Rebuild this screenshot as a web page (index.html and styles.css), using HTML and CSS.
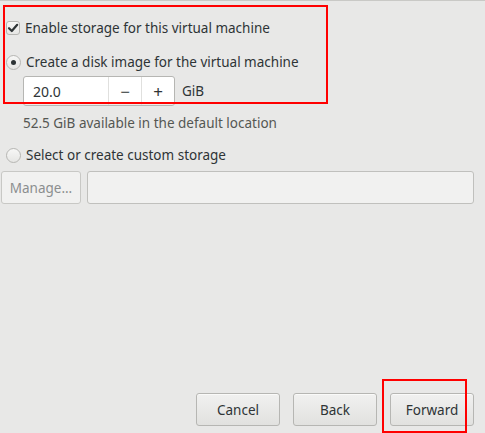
FILE: index.html
```html
<!DOCTYPE html>
<html>
<head>
<meta charset="utf-8">
<link rel="stylesheet" href="styles.css">
</head>
<body>
<div class="page">
  <div class="form">
    <div class="row opt opt-first">
      <span class="check"><svg width="12" height="12" viewBox="0 0 12 12"><path d="M2 6.2 L4.8 9 L10.2 2.8" fill="none" stroke="#2e3436" stroke-width="2.2" stroke-linecap="round" stroke-linejoin="round"/></svg></span>
      <span class="label">Enable storage for this virtual machine</span>
    </div>
    <div class="row opt">
      <span class="radio on"></span>
      <span class="label">Create a disk image for the virtual machine</span>
    </div>
    <div class="row size">
      <div class="spin">
        <span class="spin-entry">20.0</span>
        <span class="spin-btn">&#8722;</span>
        <span class="spin-btn">+</span>
      </div>
      <span class="unit">GiB</span>
    </div>
    <div class="hint">52.5 GiB available in the default location</div>
    <div class="row opt opt2">
      <span class="radio"></span>
      <span class="label">Select or create custom storage</span>
    </div>
    <div class="row manage">
      <span class="btn disabled">Manage...</span>
      <span class="path-entry"></span>
    </div>
  </div>
  <div class="footer">
    <span class="btn">Cancel</span>
    <span class="btn">Back</span>
    <span class="btn">Forward</span>
  </div>
</div>
<div class="mark mark1"></div>
<div class="mark mark2"></div>
</body>
</html>
```
FILE: styles.css
```css
html, body {
  margin: 0;
  padding: 0;
}
body {
  background: #e8e8e7;
  font-family: "Noto Sans", "DejaVu Sans", sans-serif;
  font-size: 13.5px;
  color: #2e3436;
  width: 485px;
  height: 433px;
  overflow: hidden;
  position: relative;
}
.page {
  box-sizing: border-box;
  height: 433px;
  border-top: 1px solid #c9c9c6;
  display: flex;
  flex-direction: column;
  padding: 13px 11px 7px 1px;
}
.form {
  display: flex;
  flex-direction: column;
}
.row {
  display: flex;
  align-items: center;
}
.opt {
  height: 28px;
  padding-left: 5px;
  gap: 5px;
}
.opt-first { margin-bottom: 6px; }
.opt2 { height: 30px; }
.check {
  box-sizing: border-box;
  width: 14px;
  height: 14px;
  border: 1px solid #b6b6b3;
  border-radius: 3px;
  background: linear-gradient(#f7f7f6, #e6e6e4);
  display: flex;
  align-items: center;
  justify-content: center;
}
.radio {
  box-sizing: border-box;
  width: 15px;
  height: 15px;
  border: 1px solid #b6b6b3;
  border-radius: 50%;
  background: linear-gradient(#f7f7f6, #e6e6e4);
  display: flex;
  align-items: center;
  justify-content: center;
}
.radio.on::after {
  content: "";
  width: 5px;
  height: 5px;
  border-radius: 50%;
  background: #2e3436;
}
.label { white-space: nowrap; }
.size {
  padding-left: 22px;
  height: 30px;
  gap: 7px;
}
.spin {
  box-sizing: border-box;
  display: flex;
  height: 30px;
  width: 152px;
  border: 1px solid #b6b6b3;
  border-radius: 3px;
  background: #fff;
  box-shadow: inset 0 -1px 0 #ededec;
}
.spin-entry {
  width: 84px;
  padding-left: 9px;
  box-sizing: border-box;
  display: flex;
  align-items: center;
  font-size: 14px;
}
.spin-btn {
  flex: 1;
  display: flex;
  align-items: center;
  justify-content: center;
  border-left: 1px solid #e0e0de;
  font-size: 17px;
  color: #2e3436;
}
.hint {
  height: 34px;
  line-height: 34px;
  padding-left: 22px;
  color: #555753;
}
.manage {
  margin-top: 1px;
  gap: 6px;
}
.btn {
  box-sizing: border-box;
  height: 33px;
  width: 84px;
  display: flex;
  align-items: center;
  justify-content: center;
  border: 1px solid #b6b6b3;
  border-radius: 3px;
  background: linear-gradient(#f1f1f0, #e1e1df);
  box-shadow: inset 0 1px 0 #fafaf9;
}
.btn.disabled {
  width: 80px;
  background: #f1f1f0;
  border-color: #c8c8c5;
  color: #8b8e8f;
  box-shadow: none;
}
.path-entry {
  box-sizing: border-box;
  height: 33px;
  flex: 1;
  border: 1px solid #c0c0bd;
  border-radius: 3px;
  background: #f1f1f0;
}
.footer {
  margin-top: auto;
  display: flex;
  justify-content: flex-end;
  gap: 13px;
}
.mark {
  position: absolute;
  box-sizing: border-box;
  border: 2px solid #ff0000;
}
.mark1 { left: 3px; top: 5px; width: 325px; height: 99px; }
.mark2 { left: 382px; top: 379px; width: 85px; height: 54px; }
```
